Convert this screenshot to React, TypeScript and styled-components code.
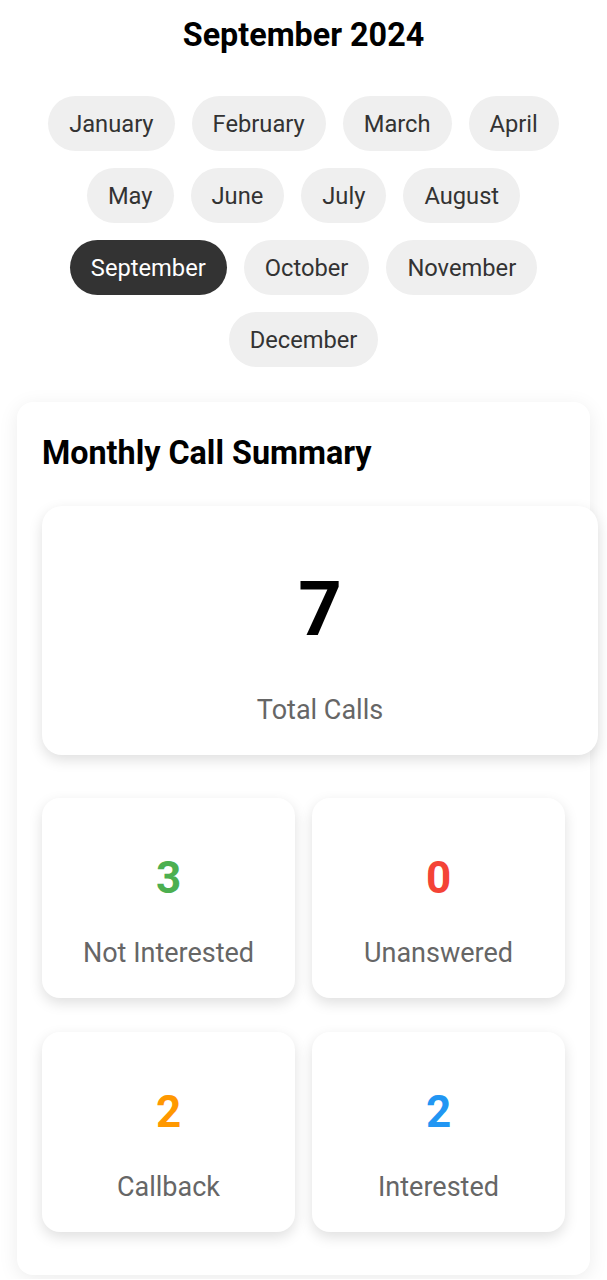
import React from "react";
import styled, { createGlobalStyle } from "styled-components";

const GlobalStyle = createGlobalStyle`
  html, body { margin: 0; padding: 0; background: #ffffff; }
  body { font-family: Roboto, "Noto Sans", "Liberation Sans", sans-serif; }
  * { box-sizing: border-box; }
`;

const Page = styled.div`
  padding: 16px 17px 4px;
`;

const Title = styled.h1`
  margin: 0;
  text-align: center;
  font-size: 32.3px;
  line-height: 38px;
  font-weight: 700;
  color: #000;
`;

const MonthList = styled.div`
  display: flex;
  flex-wrap: wrap;
  justify-content: center;
  gap: 17px;
  margin-top: 42px;
  padding: 0 10px;
`;

const MonthPill = styled.button<{ $active?: boolean }>`
  height: 55px;
  padding: 0 21px;
  border: none;
  border-radius: 28px;
  font-family: inherit;
  font-size: 23.7px;
  font-weight: 400;
  background: ${(p) => (p.$active ? "#333333" : "#efefef")};
  color: ${(p) => (p.$active ? "#ffffff" : "#333333")};
  cursor: pointer;
`;

const Card = styled.section`
  margin-top: 35px;
  background: #fff;
  border-radius: 16px;
  padding: 25px 25px 43px;
  box-shadow: 0 4px 20px rgba(0, 0, 0, 0.08);
`;

const CardTitle = styled.h2`
  margin: 0;
  font-size: 32.3px;
  line-height: 52px;
  font-weight: 700;
  color: #000;
`;

const TotalBox = styled.div`
  margin-top: 27px;
  width: calc(100% + 33px);
  background: #fff;
  border-radius: 20px;
  padding: 65px 0 29px;
  text-align: center;
  box-shadow: 0 5px 14px rgba(0, 0, 0, 0.13);
`;

const TotalNumber = styled.div`
  font-size: 76px;
  line-height: 1;
  font-weight: 700;
  color: #000;
  margin-bottom: 47px;
`;

const Label = styled.div`
  font-size: 27px;
  line-height: 32px;
  color: #666;
`;

const StatGrid = styled.div`
  margin-top: 43px;
  display: grid;
  grid-template-columns: 1fr 1fr;
  column-gap: 17px;
  row-gap: 34px;
`;

const StatBox = styled.div`
  background: #fff;
  border-radius: 18px;
  height: 200px;
  padding-top: 58px;
  text-align: center;
  box-shadow: 0 5px 14px rgba(0, 0, 0, 0.13);
`;

const StatNumber = styled.div<{ $color: string }>`
  font-size: 44px;
  line-height: 1;
  font-weight: 700;
  color: ${(p) => p.$color};
  margin-bottom: 37px;
`;

const months = [
  "January",
  "February",
  "March",
  "April",
  "May",
  "June",
  "July",
  "August",
  "September",
  "October",
  "November",
  "December",
];

const stats = [
  { value: 3, label: "Not Interested", color: "#4caf50" },
  { value: 0, label: "Unanswered", color: "#f44336" },
  { value: 2, label: "Callback", color: "#ff9800" },
  { value: 2, label: "Interested", color: "#2196f3" },
];

export default function App() {
  return (
    <>
      <GlobalStyle />
      <Page>
        <Title>September 2024</Title>
        <MonthList>
          {months.map((m) => (
            <MonthPill key={m} $active={m === "September"}>
              {m}
            </MonthPill>
          ))}
        </MonthList>
        <Card>
          <CardTitle>Monthly Call Summary</CardTitle>
          <TotalBox>
            <TotalNumber>7</TotalNumber>
            <Label>Total Calls</Label>
          </TotalBox>
          <StatGrid>
            {stats.map((s) => (
              <StatBox key={s.label}>
                <StatNumber $color={s.color}>{s.value}</StatNumber>
                <Label>{s.label}</Label>
              </StatBox>
            ))}
          </StatGrid>
        </Card>
      </Page>
    </>
  );
}
